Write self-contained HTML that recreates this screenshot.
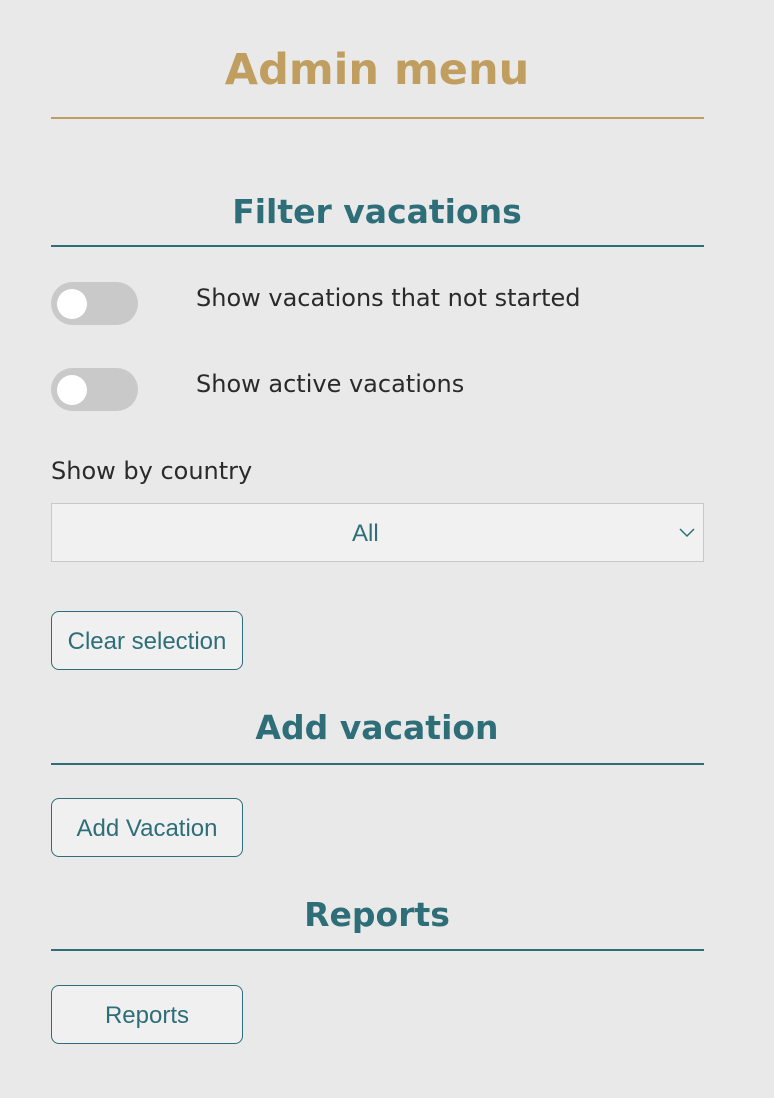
<!DOCTYPE html>
<html><head><style>
body{margin:0;width:774px;height:1098px;background:#e9e9e9;position:relative;overflow:hidden;font-family:"DejaVu Sans",Verdana,sans-serif;}
.a{position:absolute;}
h1,h2{margin:0;position:absolute;left:0;width:754px;text-align:center;font-weight:bold;white-space:nowrap;}
h1{color:#c09e5f;font-size:43px;top:45px;}
h2{color:#2e6e78;font-size:33px;}
.line{position:absolute;left:51px;width:653px;height:2px;background:#2e6e78;}
.tog{position:absolute;left:51px;width:87px;height:43px;border-radius:22px;background:#c9c9c9;}
.tog::after{content:"";position:absolute;left:6px;top:7px;width:30px;height:30px;border-radius:50%;background:#fff;}
.lbl{position:absolute;font-size:24px;color:#2a2a2a;white-space:nowrap;}
.btn{position:absolute;left:51px;width:190px;height:57px;border:1px solid #2e6e78;border-radius:8px;background:#f0f0f0;color:#2e6e78;font-family:"Liberation Sans",Arial,sans-serif;font-size:24px;display:flex;align-items:center;justify-content:center;padding-top:2px;box-sizing:content-box;height:55px;}
</style></head><body>
<h1>Admin menu</h1>
<div class="line" style="top:117px;background:#c09e5f"></div>
<h2 style="top:192px">Filter vacations</h2>
<div class="line" style="top:245px"></div>
<div class="tog" style="top:282px"></div>
<div class="lbl" style="left:196px;top:284px">Show vacations that not started</div>
<div class="tog" style="top:368px"></div>
<div class="lbl" style="left:196px;top:370px">Show active vacations</div>
<div class="lbl" style="left:51px;top:457px">Show by country</div>
<div class="a" style="left:51px;top:503px;width:651px;height:57px;border:1px solid #c8c8c8;background:#f1f1f1;"></div>
<div class="a" style="left:352px;top:520px;font-family:'Liberation Sans',Arial,sans-serif;font-size:24px;color:#2e6e78">All</div>
<svg class="a" style="left:678px;top:527px" width="18" height="12" viewBox="0 0 18 12"><path d="M2 2 L9 9 L16 2" fill="none" stroke="#2e6e78" stroke-width="1.5"/></svg>
<div class="btn" style="top:611px">Clear selection</div>
<h2 style="top:708px">Add vacation</h2>
<div class="line" style="top:763px"></div>
<div class="btn" style="top:798px">Add Vacation</div>
<h2 style="top:895px">Reports</h2>
<div class="line" style="top:949px"></div>
<div class="btn" style="top:985px">Reports</div>
</body></html>
